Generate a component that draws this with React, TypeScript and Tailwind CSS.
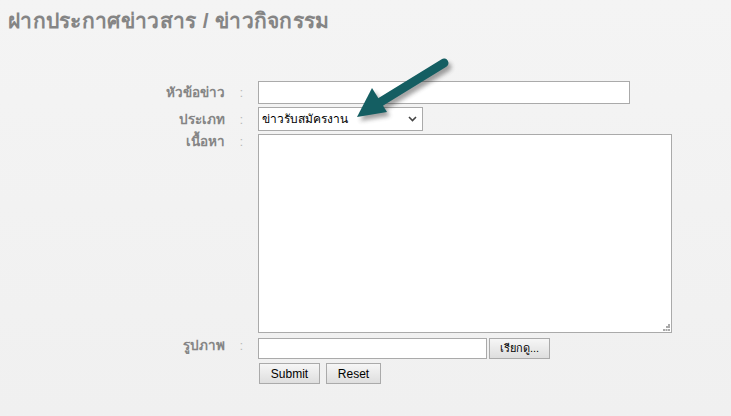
import React from 'react';

const FONT = '[font-family:Tahoma,"Liberation_Sans","Noto_Sans",sans-serif]';

function Arrow() {
  return (
    <svg
      className="pointer-events-none absolute left-[340px] top-[50px]"
      width="120"
      height="90"
      viewBox="0 0 120 90"
    >
      <defs>
        <filter id="sh" x="-20%" y="-20%" width="150%" height="150%">
          <feGaussianBlur stdDeviation="2" />
        </filter>
      </defs>
      {/* shadow */}
      <g transform="translate(3,4)" opacity="0.45" filter="url(#sh)">
        <line x1="104" y1="13" x2="34" y2="56" stroke="#333" strokeWidth="9" strokeLinecap="round" />
        <polygon points="17,67 32,38 47,62" fill="#333" />
      </g>
      <line x1="104" y1="13" x2="34" y2="56" stroke="#145e62" strokeWidth="9" strokeLinecap="round" />
      <polygon points="17,67 32,38 47,62" fill="#145e62" />
    </svg>
  );
}

export default function App() {
  return (
    <div
      className={`relative h-[416px] w-[731px] overflow-hidden bg-gradient-to-b from-[#f4f4f4] to-[#f0f0f0] ${FONT}`}
    >
      <h1 className="px-[8px] pt-[7px] text-[21px] font-bold leading-[27px] tracking-[0.3px] text-[#858585]">
        ฝากประกาศข่าวสาร / ข่าวกิจกรรม
      </h1>

      <form className="mt-[47px] grid grid-cols-[225px_33px_auto] gap-y-[3px] text-[13.5px]">
        {/* หัวข้อข่าว */}
        <label className="pt-[2px] text-right font-bold text-[#858585]">หัวข้อข่าว</label>
        <span className="pt-[2px] text-center text-[#bbb]">:</span>
        <div>
          <input className="block h-[23px] w-[372px] border border-[#aaa] bg-white px-1 text-[12px] outline-none" />
        </div>

        {/* ประเภท */}
        <label className="pt-[3px] text-right font-bold text-[#858585]">ประเภท</label>
        <span className="pt-[3px] text-center text-[#bbb]">:</span>
        <div>
          <div className="flex h-[24px] w-[165px] items-center justify-between border border-[#aaa] bg-white pl-[3px] pr-[5px] text-[12px] text-black">
            <span>ข่าวรับสมัครงาน</span>
            <svg width="9" height="6" viewBox="0 0 9 6">
              <path d="M1 1l3.5 3.5L8 1" fill="none" stroke="#444" strokeWidth="1.6" />
            </svg>
          </div>
        </div>

        {/* เนื้อหา */}
        <label className="text-right font-bold leading-[16px] text-[#858585]">เนื้อหา</label>
        <span className="text-center leading-[16px] text-[#bbb]">:</span>
        <div>
          <div className="relative h-[199px] w-[414px] border border-[#aaa] bg-white">
            <svg className="absolute bottom-[1px] right-[1px]" width="7" height="7" viewBox="0 0 7 7">
              <rect x="5" y="0" width="2" height="2" fill="#aaa" />
              <rect x="3" y="2" width="2" height="2" fill="#aaa" />
              <rect x="5" y="2" width="2" height="2" fill="#aaa" />
              <rect x="0" y="5" width="2" height="2" fill="#aaa" />
              <rect x="2.5" y="5" width="2" height="2" fill="#aaa" />
              <rect x="5" y="5" width="2" height="2" fill="#aaa" />
            </svg>
          </div>
        </div>

        {/* รูปภาพ */}
        <label className="text-right font-bold text-[#858585]">รูปภาพ</label>
        <span className="text-center text-[#bbb]">:</span>
        <div className="flex items-center gap-[2px] pt-[2px]">
          <div className="h-[21px] w-[229px] border border-[#aaa] bg-white" />
          <button
            type="button"
            className="h-[21px] w-[61px] border border-[#aaa] bg-gradient-to-b from-[#f6f6f6] to-[#dedede] text-[11px] text-black"
          >
            เรียกดู...
          </button>
        </div>

        {/* buttons */}
        <span />
        <span />
        <div className="flex gap-[6px] pl-[1px] pt-[1px]">
          <button
            type="button"
            className="h-[21px] w-[61px] border border-[#aaa] bg-gradient-to-b from-[#f6f6f6] to-[#dedede] text-[12px] text-black"
          >
            Submit
          </button>
          <button
            type="button"
            className="h-[21px] w-[55px] border border-[#aaa] bg-gradient-to-b from-[#f6f6f6] to-[#dedede] text-[12px] text-black"
          >
            Reset
          </button>
        </div>
      </form>

      <Arrow />
    </div>
  );
}
